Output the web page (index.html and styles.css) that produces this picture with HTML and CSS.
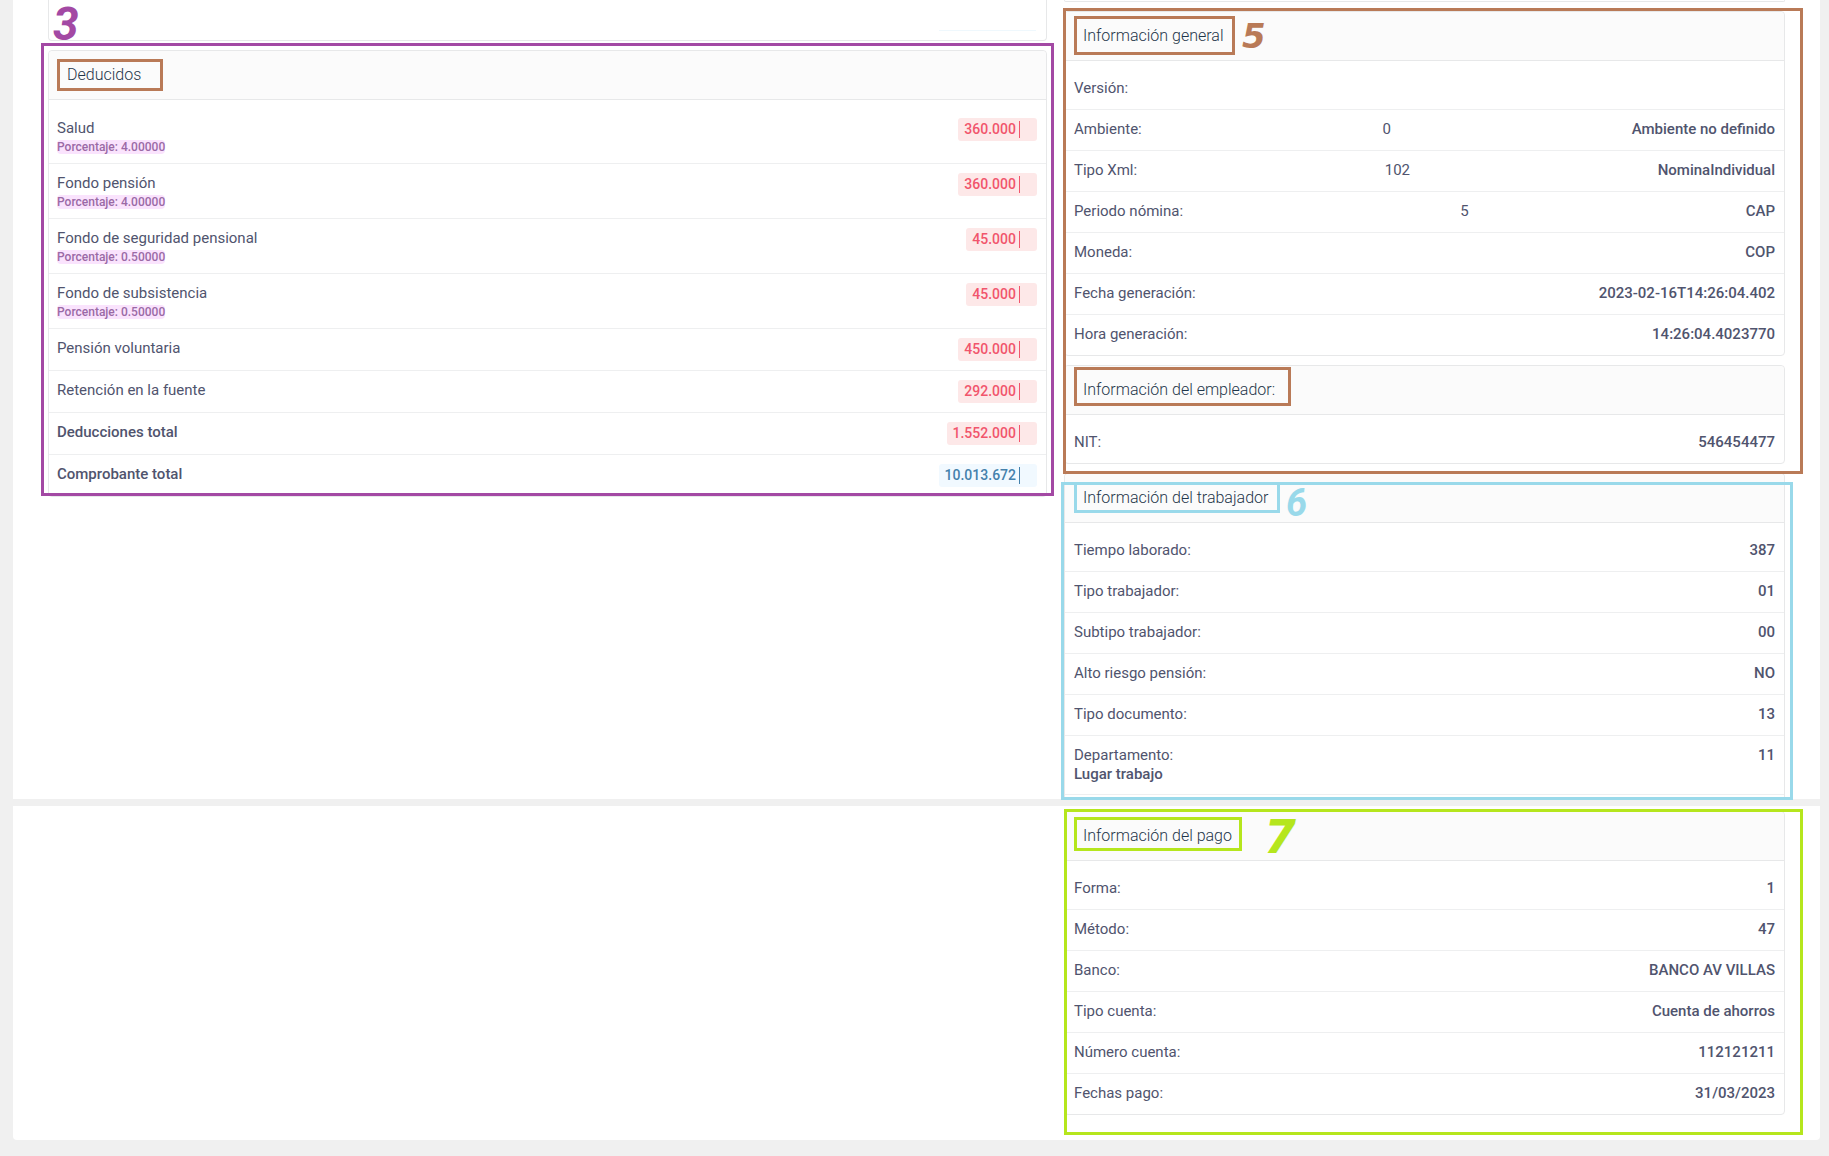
FILE: index.html
```html
<!DOCTYPE html>
<html lang="es">
<head>
<meta charset="utf-8">
<meta name="viewport" content="width=device-width, initial-scale=1">
<title>Comprobante de nómina</title>
<link rel="stylesheet" href="styles.css">
</head>
<body>
<main>
  <div class="sheet sheet-first">
    <div class="column">
      <section class="card card-tail card-tail-tall"><div class="badge-tail"></div><span class="mark mark-3">3</span></section>
      <section class="card">
        <header><h2 class="boxed box-deducidos">Deducidos</h2></header>
        <dl class="amounts">
          <div class="row detailed"><dt>Salud<small>Porcentaje: 4.00000</small></dt><dd class="badge">360.000</dd></div>
          <div class="row detailed"><dt>Fondo pensión<small>Porcentaje: 4.00000</small></dt><dd class="badge">360.000</dd></div>
          <div class="row detailed"><dt>Fondo de seguridad pensional<small>Porcentaje: 0.50000</small></dt><dd class="badge">45.000</dd></div>
          <div class="row detailed"><dt>Fondo de subsistencia<small>Porcentaje: 0.50000</small></dt><dd class="badge">45.000</dd></div>
          <div class="row"><dt>Pensión voluntaria</dt><dd class="badge">450.000</dd></div>
          <div class="row"><dt>Retención en la fuente</dt><dd class="badge">292.000</dd></div>
          <div class="row total"><dt>Deducciones total</dt><dd class="badge">1.552.000</dd></div>
          <div class="row total"><dt>Comprobante total</dt><dd class="badge badge-blue">10.013.672</dd></div>
        </dl>
        <div class="frame frame-purple"></div>
      </section>
    </div>
    <div class="column">
      <section class="card card-tail"></section>
      <div class="group">
        <section class="card">
          <header><h2 class="boxed box-general">Información general</h2><span class="mark mark-5">5</span></header>
          <dl>
            <div class="row"><dt>Versión:</dt><dd></dd></div>
            <div class="row"><dt>Ambiente:</dt><dd class="code">0</dd><dd>Ambiente no definido</dd></div>
            <div class="row"><dt>Tipo Xml:</dt><dd class="code">102</dd><dd>NominaIndividual</dd></div>
            <div class="row"><dt>Periodo nómina:</dt><dd class="code">5</dd><dd>CAP</dd></div>
            <div class="row"><dt>Moneda:</dt><dd>COP</dd></div>
            <div class="row"><dt>Fecha generación:</dt><dd>2023-02-16T14:26:04.402</dd></div>
            <div class="row"><dt>Hora generación:</dt><dd>14:26:04.4023770</dd></div>
          </dl>
        </section>
        <section class="card">
          <header><h2 class="boxed box-empleador">Información del empleador:</h2></header>
          <dl>
            <div class="row"><dt>NIT:</dt><dd>546454477</dd></div>
          </dl>
        </section>
        <div class="frame frame-brown"></div>
      </div>
      <section class="card card-cut">
        <header><h2 class="boxed box-trabajador">Información del trabajador</h2><span class="mark mark-6">6</span></header>
        <dl>
          <div class="row"><dt>Tiempo laborado:</dt><dd>387</dd></div>
          <div class="row"><dt>Tipo trabajador:</dt><dd>01</dd></div>
          <div class="row"><dt>Subtipo trabajador:</dt><dd>00</dd></div>
          <div class="row"><dt>Alto riesgo pensión:</dt><dd>NO</dd></div>
          <div class="row"><dt>Tipo documento:</dt><dd>13</dd></div>
          <div class="row"><dt>Departamento:<strong>Lugar trabajo</strong></dt><dd>11</dd></div>
        </dl>
        <div class="frame frame-cyan"></div>
      </section>
    </div>
  </div>
  <div class="sheet sheet-last">
    <div class="column"></div>
    <div class="column">
      <section class="card">
        <header><h2 class="boxed box-pago">Información del pago</h2><span class="mark mark-7">7</span></header>
        <dl>
          <div class="row"><dt>Forma:</dt><dd>1</dd></div>
          <div class="row"><dt>Método:</dt><dd>47</dd></div>
          <div class="row"><dt>Banco:</dt><dd>BANCO AV VILLAS</dd></div>
          <div class="row"><dt>Tipo cuenta:</dt><dd>Cuenta de ahorros</dd></div>
          <div class="row"><dt>Número cuenta:</dt><dd>112121211</dd></div>
          <div class="row"><dt>Fechas pago:</dt><dd>31/03/2023</dd></div>
        </dl>
        <div class="frame frame-green"></div>
      </section>
    </div>
  </div>
</main>
</body>
</html>
```
FILE: styles.css
```css
* { box-sizing: border-box; }

:root {
  --brown: #b97a57;
  --purple: #a349a4;
  --cyan: #99d9ea;
  --green: #b5e61d;
  --line: #e7e8e9;
}

body {
  margin: 0;
  background: #f0f0f0;
  color: #50546e;
  font: 400 15px/20px Roboto, "Liberation Sans", sans-serif;
}

main {
  display: flex;
  flex-direction: column;
  gap: 7px;
  padding: 0 9px 16px 13px;
}

/* Sheets and columns */
.sheet {
  display: grid;
  grid-template-columns: 999fr 721fr;
  gap: 17px;
  padding: 0 35px;
  background: #fff;
}
.sheet-last {
  padding-top: 5px;
  padding-bottom: 25px;
  border-radius: 0 0 4px 4px;
}
.column,
.group {
  display: flex;
  flex-direction: column;
  gap: 9px;
  min-width: 0;
}
.group { position: relative; }

/* Cards */
.card {
  position: relative;
  border: 1px solid var(--line);
  border-radius: 4px;
}
.card-tail {
  height: 2px;
  border-top: 0;
  border-radius: 0 0 4px 4px;
}
.card-tail-tall {
  height: 41px;
  padding: 30px 10px 0;
}
.badge-tail {
  width: 97px;
  height: 1px;
  margin-left: auto;
  background: #eff8fd;
}
.card-cut {
  padding-bottom: 4px;
  border-bottom: 0;
  border-radius: 4px 4px 0 0;
}

header {
  position: relative;
  display: flex;
  padding: 0 18px;
  border-bottom: 1px solid var(--line);
  border-radius: 4px 4px 0 0;
  background: #fbfbfb;
}
h2 {
  position: relative;
  margin: 0;
  color: #1f364a;
  font-size: 16px;
  font-weight: 300;
  line-height: 48px;
}

dl {
  margin: 0;
  padding-top: 8px;
}
.row {
  display: flex;
  align-items: flex-start;
  justify-content: space-between;
  padding: 9px 9px 11px 9px;
  border-bottom: 1px solid #eeeff0;
}
.row:last-child { border-bottom: 0; }
.card-cut .row:last-child {
  padding-bottom: 10px;
  border-bottom: 1px solid #eeeff0;
}
dd {
  margin: 0;
  font-weight: 500;
}
dd.code { font-weight: 400; }
strong {
  display: block;
  font-weight: 500;
  line-height: 19px;
}

/* Amount rows */
.amounts { padding-top: 9px; }
.amounts .row {
  padding-bottom: 9px;
  padding-left: 8px;
}
.total dt { font-weight: 500; }
small {
  display: block;
  width: max-content;
  margin-top: 2px;
  border-radius: 4px;
  background: #fae3fd;
  color: #9b6aa6;
  font-size: 12px;
  font-weight: 500;
  line-height: 14px;
}
.badge {
  display: flex;
  align-items: center;
  gap: 3px;
  padding: 0 0 0 6px;
  border-radius: 3px;
  background: #fde8e8;
  color: #f1556c;
  font-size: 14px;
  line-height: 23px;
}
.badge::after {
  content: "";
  width: 17px;
  height: 17px;
  border-left: 1px solid currentColor;
}
.badge-blue {
  background: #f1f9ff;
  color: #4481ac;
}

/* Annotation frames, title boxes and numbers */
.frame {
  position: absolute;
  z-index: 1;
  border: 3px solid;
  pointer-events: none;
}
.frame-purple { inset: -8px -8px 0 -8px; color: var(--purple); }
.frame-brown { inset: -3px -18px -10px -1px; color: var(--brown); }
.frame-cyan { inset: 8px -9px -1px -4px; color: var(--cyan); }
.frame-green { inset: -3px -19px -21px -1px; color: var(--green); }

.boxed::after {
  content: "";
  position: absolute;
  border: 3px solid;
}
.box-deducidos::after { inset: 8px -22px 8px -10px; color: var(--brown); }
.box-general::after { inset: 4px -12px 5px -9px; color: var(--brown); }
.box-empleador::after { inset: 1px -16px 8px -9px; color: var(--brown); }
.box-trabajador::after { inset: 8px -12px 9px -9px; color: var(--cyan); }
.box-pago::after { inset: 5px -10px 9px -9px; color: var(--green); }

.mark {
  position: absolute;
  font: italic bold 46px/48px "DejaVu Sans", sans-serif;
}
.mark-3 { top: 0; left: 4px; color: var(--purple); font-family: Roboto, sans-serif; }
.mark-5 { top: 0; left: 177px; color: var(--brown); font-size: 34px; }
.mark-6 { top: 5px; left: 221px; color: var(--cyan); font-size: 38px; font-family: Roboto, sans-serif; }
.mark-7 { top: 1px; left: 199px; color: var(--green); }
```
